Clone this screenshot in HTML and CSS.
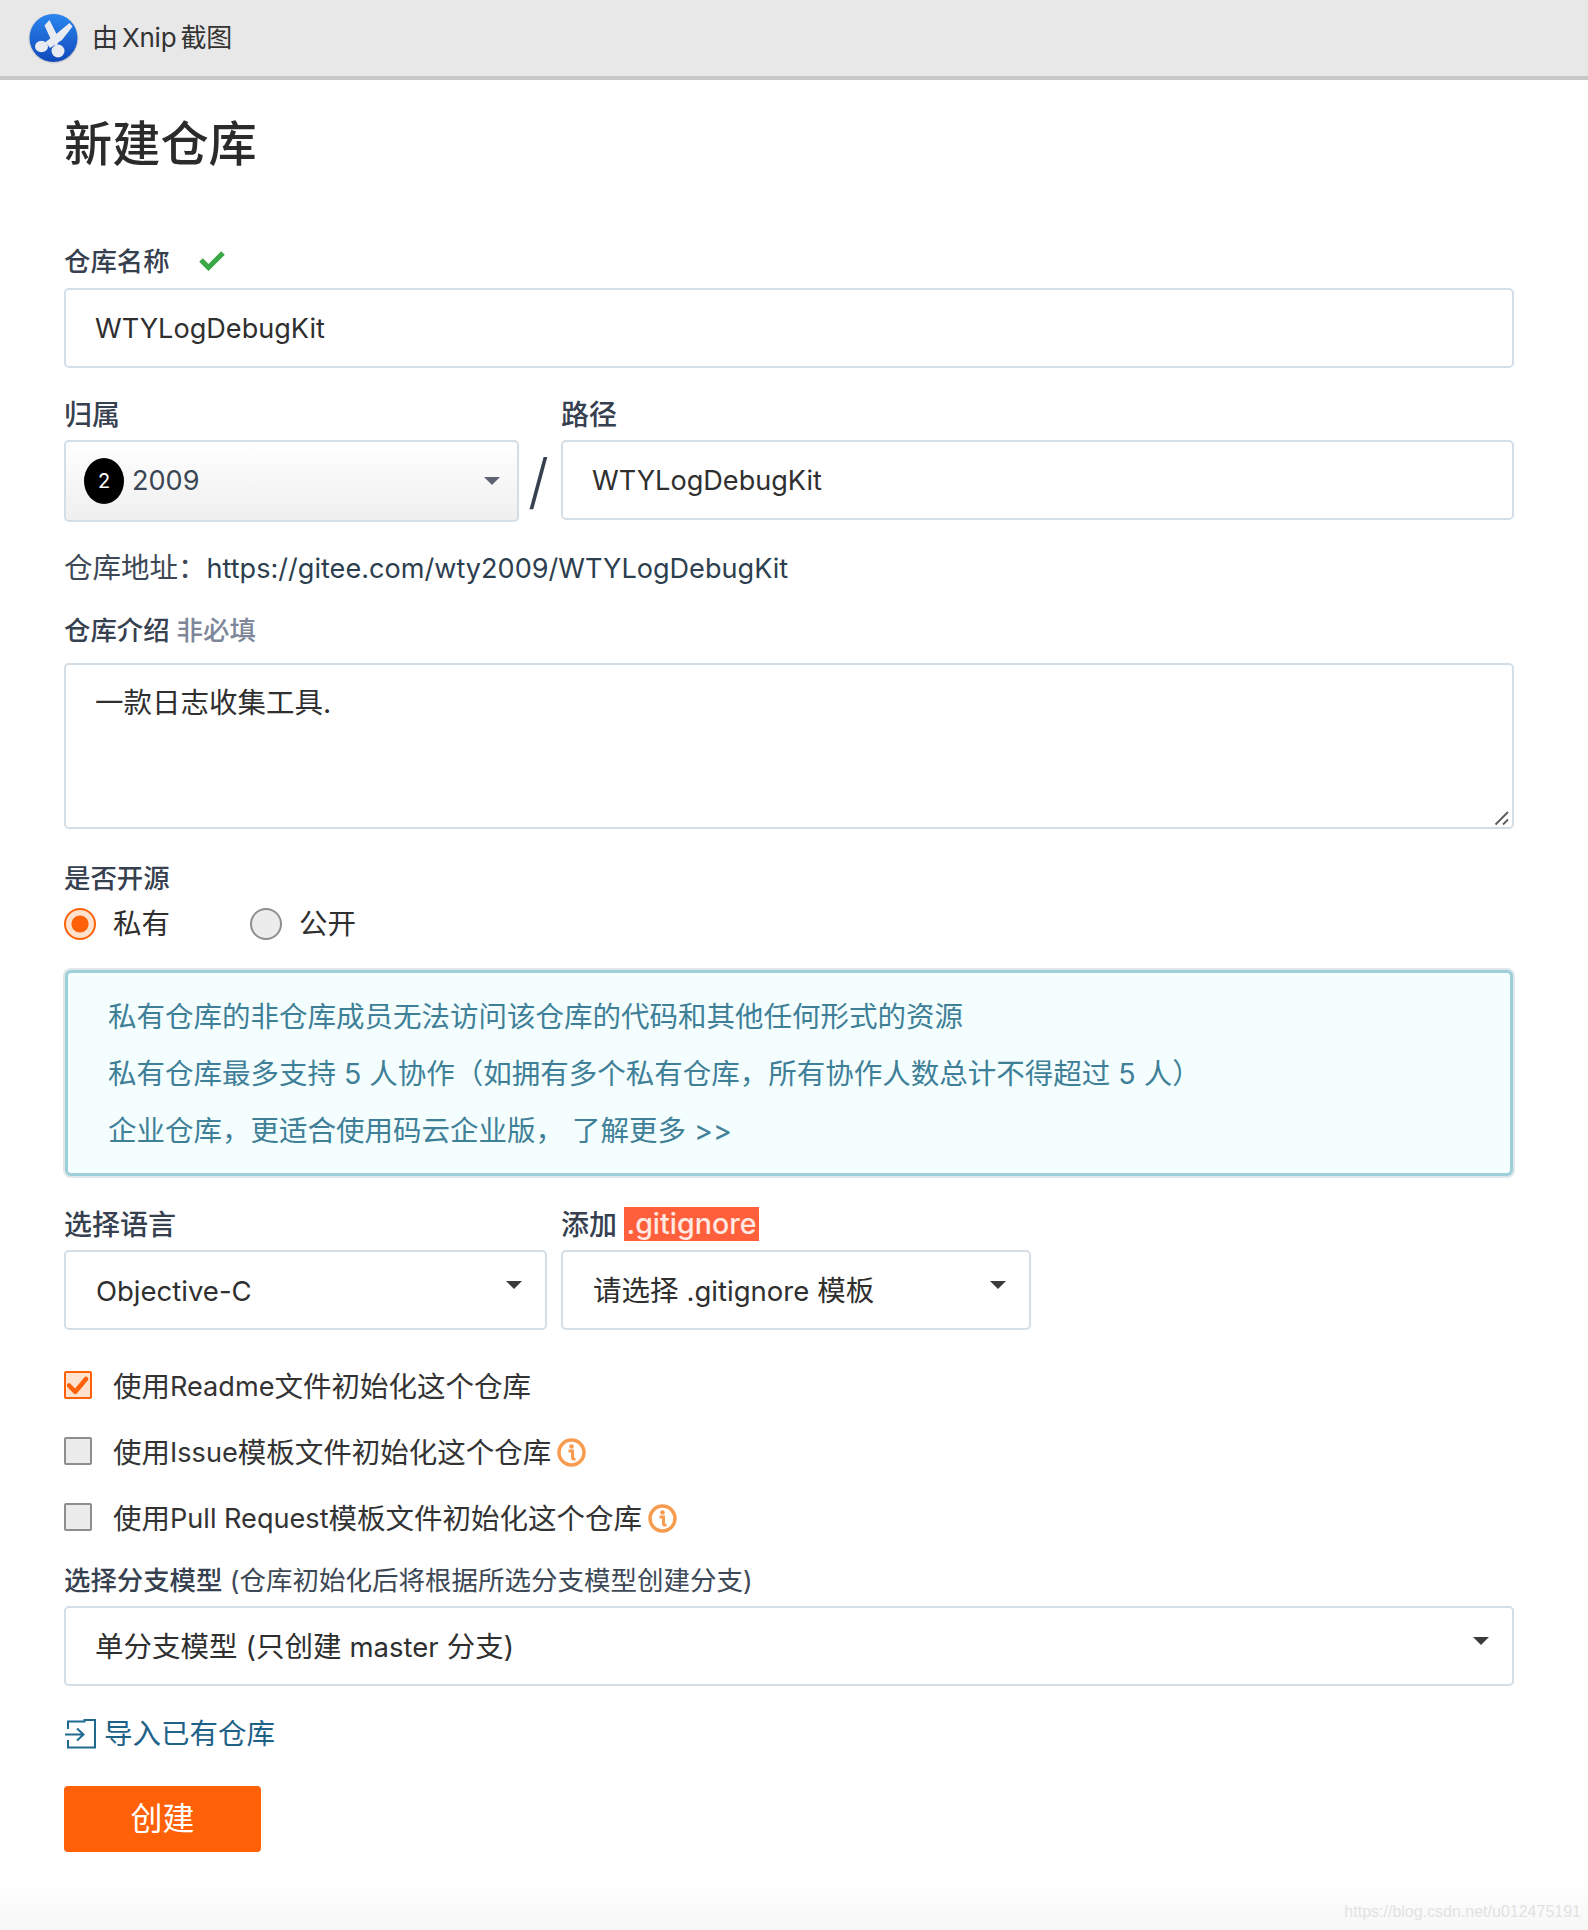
FILE: index.html
```html
<!DOCTYPE html>
<html lang="zh-CN">
<head>
<meta charset="utf-8">
<title>新建仓库</title>
<link rel="stylesheet" href="styles.css">
</head>
<body>
<header class="xnip">
  <svg class="xnip-logo" width="56" height="56" viewBox="0 0 56 56">
    <defs>
      <linearGradient id="lg" x1="0" y1="0" x2="0" y2="1"><stop offset="0" stop-color="#2a86ee"/><stop offset="1" stop-color="#1049bb"/></linearGradient>
    </defs>
    <circle cx="28.500" cy="29.500" r="25" fill="#bdbdbd" opacity=".55"/>
    <circle cx="28.500" cy="29" r="24" fill="url(#lg)"/>
    <path d="M19.500 16.500 L24.500 11 L33.500 29 L32 38 L27.500 34 Z" fill="#e9ebf2"/>
    <path d="M44.500 14 L47.500 17.500 L37 31 L25 39 L20.500 33 L30 26 Z" fill="#e9ebf2"/>
    <ellipse cx="16.500" cy="37.500" rx="6.500" ry="5.800" fill="#e9ebf2"/>
    <circle cx="33" cy="42" r="6.500" fill="#e9ebf2"/>
  </svg>
  <span class="xnip-text">由 Xnip 截图</span>
</header>
<main class="page">
  <h1 class="title">新建仓库</h1>

  <div class="label label-first">仓库名称
    <svg class="ok" width="28" height="22" viewBox="0 0 28 22"><path d="M3 11 L10.500 18.500 L25 4" fill="none" stroke="#3aa844" stroke-width="5"/></svg>
  </div>
  <div class="field tall"><span class="en">WTYLogDebugKit</span></div>

  <div class="cols cols-top">
    <div class="col owner-col">
      <div class="label label-lg">归属</div>
      <div class="field select owner">
        <span class="avatar">2</span><span class="en">2009</span>
        <span class="caret caret-grey"></span>
      </div>
    </div>
    <div class="slash">/</div>
    <div class="col path-col">
      <div class="label label-lg">路径</div>
      <div class="field tall"><span class="en">WTYLogDebugKit</span></div>
    </div>
  </div>

  <div class="address">仓库地址：<span class="url en">https://gitee.com/wty2009/WTYLogDebugKit</span></div>

  <div class="label label-intro">仓库介绍 <span class="optional">非必填</span></div>
  <div class="field area">一款日志收集工具.
    <svg class="grip" width="16" height="16" viewBox="0 0 16 16"><path d="M1.500 14.500 L14 2 M9 14.500 L14 9.500" stroke="#5a5a5a" stroke-width="1.800" fill="none"/></svg>
  </div>

  <div class="label label-open">是否开源</div>
  <div class="radios">
    <span class="radio-item"><span class="radio on"></span>私有</span>
    <span class="radio-item"><span class="radio"></span>公开</span>
  </div>

  <div class="notice">
    <p>私有仓库的非仓库成员无法访问该仓库的代码和其他任何形式的资源</p>
    <p>私有仓库最多支持 5 人协作（如拥有多个私有仓库，所有协作人数总计不得超过 5 人）</p>
    <p>企业仓库，更适合使用码云企业版， 了解更多 &gt;&gt;</p>
  </div>

  <div class="cols cols-lang">
    <div class="col lang-col">
      <div class="label label-lg">选择语言</div>
      <div class="field select"><span class="en en-wide">Objective-C</span><span class="caret"></span></div>
    </div>
    <div class="col ignore-col">
      <div class="label label-lg">添加 <span class="mark">.gitignore</span></div>
      <div class="field select">请选择 <span class="en en-wide">.gitignore</span> 模板<span class="caret"></span></div>
    </div>
  </div>

  <div class="checks">
    <div class="check-row"><span class="check on"><svg width="22" height="20" viewBox="0 0 22 20"><path d="M2 10.500 L8.300 16.800 L19 4" fill="none" stroke="#ff6108" stroke-width="4.500" stroke-linecap="round" stroke-linejoin="round"/></svg></span>使用<span class="en">Readme</span>文件初始化这个仓库</div>
    <div class="check-row"><span class="check"></span>使用<span class="en">Issue</span>模板文件初始化这个仓库<svg class="info" width="29" height="29" viewBox="0 0 29 29"><circle cx="14.500" cy="14.500" r="12.500" fill="none" stroke="#f79c4e" stroke-width="3.500"/><circle cx="14.500" cy="8.500" r="2.300" fill="#f79c4e"/><path d="M11.500 13 H15.500 V20 Q15.500 21.500 18.500 21" fill="none" stroke="#f79c4e" stroke-width="3"/></svg></div>
    <div class="check-row"><span class="check"></span>使用<span class="en">Pull Request</span>模板文件初始化这个仓库<svg class="info" width="29" height="29" viewBox="0 0 29 29"><circle cx="14.500" cy="14.500" r="12.500" fill="none" stroke="#f79c4e" stroke-width="3.500"/><circle cx="14.500" cy="8.500" r="2.300" fill="#f79c4e"/><path d="M11.500 13 H15.500 V20 Q15.500 21.500 18.500 21" fill="none" stroke="#f79c4e" stroke-width="3"/></svg></div>
  </div>

  <div class="label label-branch">选择分支模型<span class="hint"> (仓库初始化后将根据所选分支模型创建分支)</span></div>
  <div class="field select">单分支模型 (只创建 <span class="en en-wide">master</span> 分支)<span class="caret"></span></div>

  <div class="import">
    <svg width="32" height="30" viewBox="0 0 32 30"><path d="M4 10 V2.500 H20.500 V1 H31 V28.500 H4 V21 M1 15.500 H19 M13 9.500 L19.500 15.500 L13 21.500" fill="none" stroke="#1f6a90" stroke-width="2"/></svg>
    <span>导入已有仓库</span>
  </div>

  <div class="submit">创建</div>
</main>
<div class="watermark">https://blog.csdn.net/u012475191</div>
</body>
</html>
```
FILE: styles.css
```css
* { box-sizing: border-box; }
html, body { margin: 0; padding: 0; }
body {
  position: relative;
  height: 1930px;
  overflow: hidden;
  background: linear-gradient(#fff 1880px, #f7f7f7 1930px);
  font-family: Inter, "Noto Sans CJK SC", sans-serif;
  font-size: 28.5px;
  line-height: 36px;
  color: #2f2f2f;
}
.en { font-size: 27.1px; }
.en-wide { font-size: 27.5px; }
.xnip {
  height: 80px;
  display: flex;
  align-items: center;
  padding: 0 0 2px 25px;
  background: #e8e8e8;
  border-bottom: 4px solid #c8c8c8;
}
.xnip-logo { flex: none; }
.xnip-text { margin: 2px 0 0 11px; font-size: 26px; word-spacing: -3px; letter-spacing: -.2px; color: #333; }
.page { width: 1514px; padding-left: 64px; }
.title {
  margin: 34px 0 0;
  height: 59px;
  font-size: 48.200px;
  line-height: 60px;
  font-weight: 500;
  color: #2b2b2b;
}
.label {
  height: 36px;
  margin-bottom: 9px;
  font-size: 26.4px;
  font-weight: 500;
  color: #36404f;
  white-space: nowrap;
}
.label-first { margin-top: 70px; display: flex; align-items: center; gap: 28px; line-height: 34px; }
.label-first .ok { margin-top: -2px; }
.label-lg { font-size: 28px; margin-bottom: 7px; }
.field {
  position: relative;
  display: flex;
  align-items: center;
  height: 80px;
  padding: 1px 30px 0 29px;
  background: #fff;
  border: 2.500px solid #d4dee7;
  border-radius: 5px;
  color: #2f2f2f;
  white-space: pre;
}
.cols { display: flex; }
.col { flex: none; }
.cols-top { margin-top: 29px; height: 125px; }
.owner-col { width: 455px; }
.owner { height: 82px; padding: 0 0 0 18px; background: linear-gradient(#fff, #efefef); color: #3b4654; }
.avatar {
  width: 40px;
  height: 46px;
  margin-right: 8px;
  border-radius: 50%;
  background: #000;
  color: #fff;
  font-size: 20px;
  line-height: 46px;
  text-align: center;
}
.slash {
  flex: none;
  width: 39px;
  padding-top: 52px;
  text-align: center;
  font-size: 60px;
  line-height: 64px;
  font-weight: 300;
  color: #36404f;
}
.path-col { width: 953px; margin-left: 3px; }
.address { margin-top: 28px; height: 36px; color: #3d4856; }
.url { color: #2d3f4f; }
.label-intro { margin-top: 27px; margin-bottom: 14px; line-height: 35px; }
.optional { color: #7d8799; }
.area { display: block; height: 166px; padding-top: 20px; white-space: normal; }
.grip { position: absolute; right: 2px; bottom: 1px; }
.label-open { margin-top: 32px; line-height: 35px; }
.radios { display: flex; height: 36px; }
.radio-item { display: flex; align-items: center; width: 186px; }
.radio {
  width: 32px;
  height: 32px;
  margin-right: 17px;
  border-radius: 50%;
  border: 2.500px solid #8f8f8f;
  background: #ececec;
}
.radio.on {
  border-color: #ff6108;
  background: radial-gradient(circle, #ff6108 0 8px, #ffe2ce 9px);
}
.notice {
  margin: 28px 0 0 1px;
  width: 1448px;
  height: 206px;
  padding: 26px 0 0 40px;
  background: #f4fefe;
  border: 3px solid #9dcfd8;
  border-radius: 6px;
  box-shadow: 0 0 0 2px #dfe7ea;
  color: #3f8098;
}
.notice p { margin: 0 0 21px; white-space: nowrap; }
.cols-lang { margin-top: 31px; gap: 14px; }
.lang-col { width: 483px; }
.ignore-col { width: 470px; }
.cols-lang .field { padding-left: 30px; }
.mark {
  display: inline-block;
  height: 34px;
  padding: 0 2px;
  background: #ff5f3a;
  color: #ffe9e2;
  font-size: 28.6px;
  line-height: 33px;
  vertical-align: top;
}
.select .caret { position: absolute; right: 23.5px; top: 29px; }
.owner .caret { top: 35px; right: 17.5px; }
.caret {
  width: 0;
  height: 0;
  border: 8px solid transparent;
  border-top: 8px solid #3b3b3b;
  border-bottom: 0;
}
.caret-grey { border-top-color: #5b6470; }
.checks { margin-top: 38px; display: flex; flex-direction: column; gap: 30px; }
.check-row { display: flex; align-items: center; height: 36px; line-height: 37px; white-space: pre; color: #333; }
.check {
  flex: none;
  display: flex;
  align-items: center;
  justify-content: center;
  width: 28px;
  height: 28px;
  margin-right: 21px;
  margin-top: -3px;
  border: 2.500px solid #8e8e8e;
  border-radius: 2px;
  background: #ececec;
}
.check.on { border-color: #ff6108; background: #ffe2ce; }
.info { margin-left: 6px; }
.label-branch { margin-top: 27px; margin-bottom: 7px; line-height: 35px; }
.hint { font-weight: 400; font-size: 26.5px; color: #3d4856; }
.import { margin-top: 30px; height: 36px; display: flex; align-items: center; gap: 8px; color: #1f6288; }
.submit {
  margin-top: 34px;
  width: 197px;
  height: 66px;
  border-radius: 4px;
  background: #ff6108;
  color: #fff;
  font-size: 32px;
  line-height: 66px;
  text-align: center;
}
.watermark {
  position: absolute;
  right: 7px;
  top: 1901px;
  font-family: "Liberation Sans", sans-serif;
  font-size: 16px;
  line-height: 22px;
  color: #e2e2e2;
}
```
